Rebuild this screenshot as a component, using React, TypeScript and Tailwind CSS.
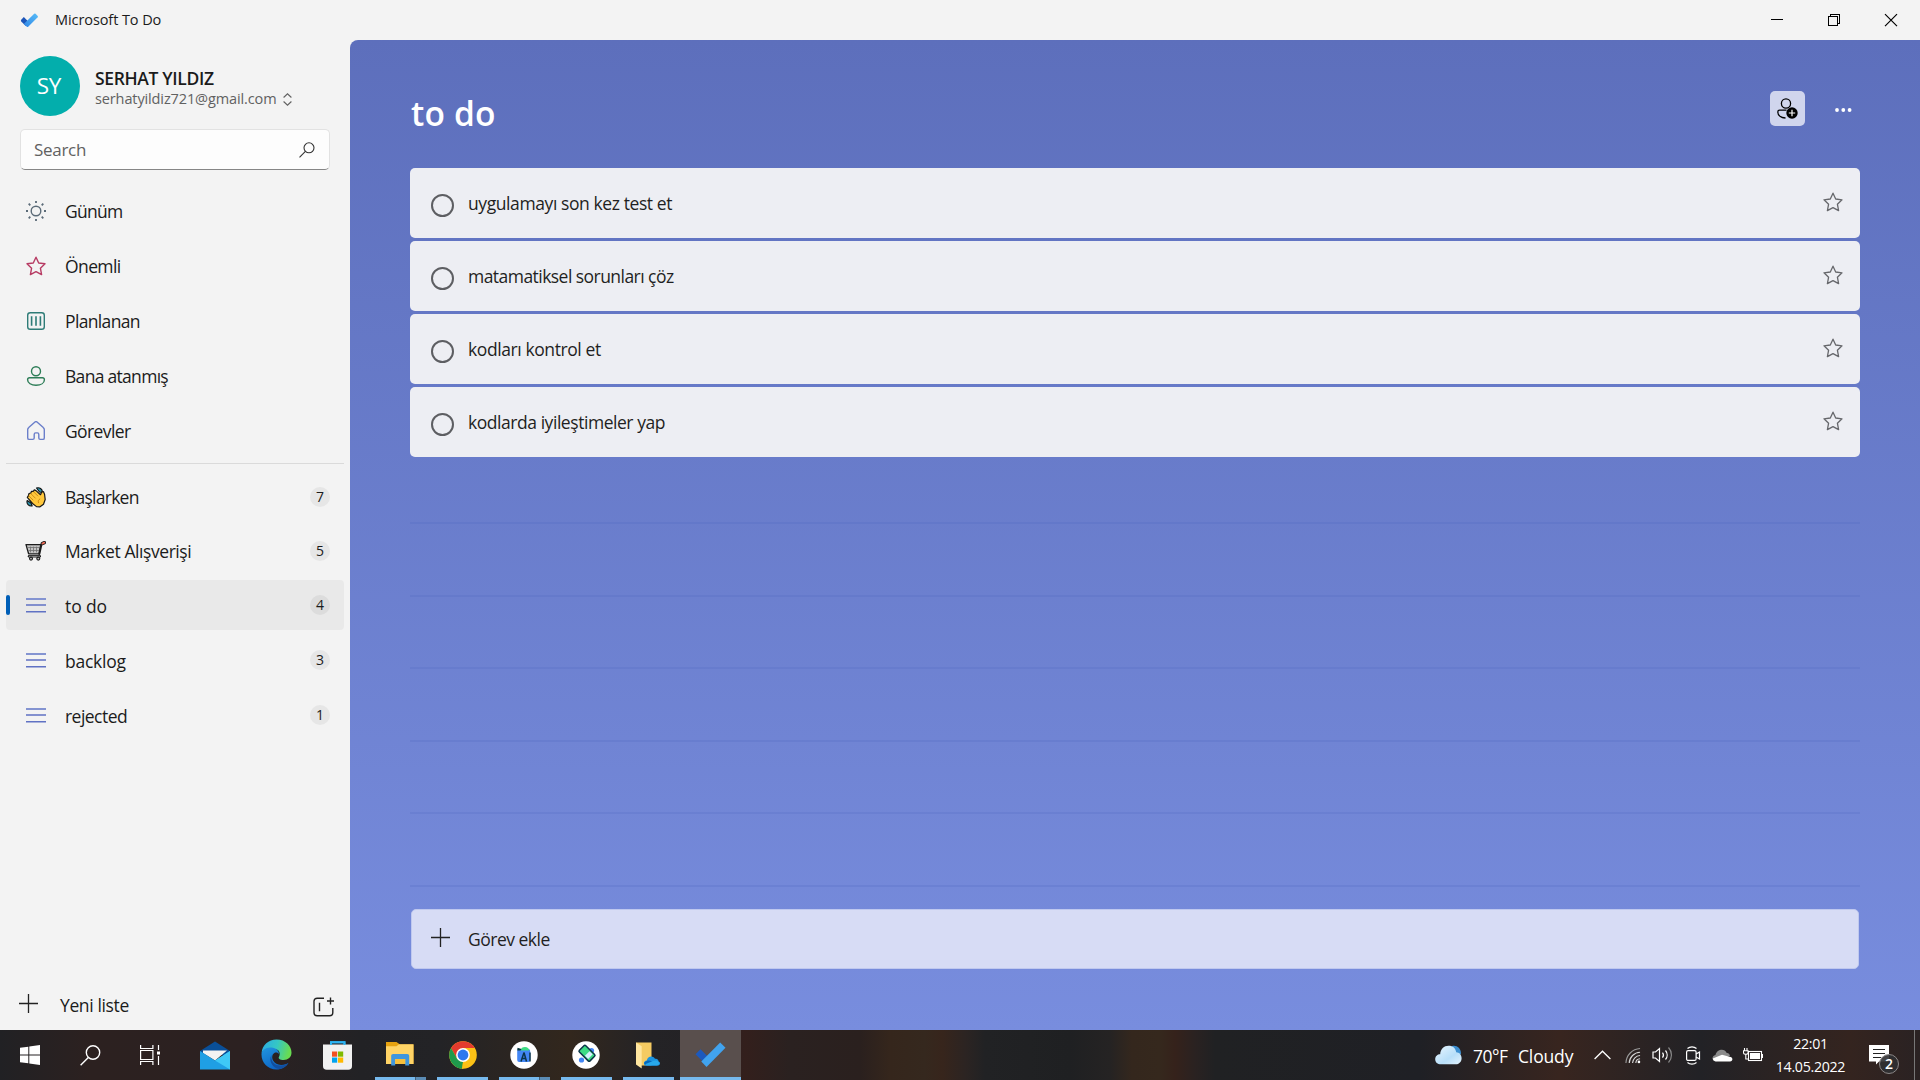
import React from "react";

const STAR = "M10 1.2 L12.7 7 L19 7.8 L14.4 12.2 L15.6 18.6 L10 15.6 L4.4 18.6 L5.6 12.2 L1 7.8 L7.3 7 Z";

function Star({ color, width = 1.3 }: { color: string; width?: number }) {
  return (
    <svg width="20" height="20" viewBox="0 0 20 20" fill="none" stroke={color} strokeWidth={width} strokeLinejoin="round" className="shrink-0">
      <path d={STAR} />
    </svg>
  );
}

function SunIcon() {
  return (
    <svg width="20" height="20" viewBox="0 0 20 20" fill="none" stroke="#5b6b78" strokeWidth="1.4">
      <circle cx="10" cy="10" r="4.8" />
      <path d="M10 0v2M10 18v2M0 10h2M18 10h2M2.700 2.700l1.600 1.600M15.700 15.700l1.600 1.600M2.700 17.300l1.600-1.600M15.700 4.300l1.600-1.600" strokeWidth="1.800" />
    </svg>
  );
}

function PlannedIcon() {
  return (
    <svg width="20" height="20" viewBox="0 0 20 20" fill="none" stroke="#2e7c77" strokeWidth="1.4">
      <rect x="1.7" y="1.7" width="16.6" height="16.6" rx="2.6" />
      <path d="M5.6 5.2v9.6M10 5.2v9.6M14.4 5.2v9.6" strokeWidth="1.6" />
    </svg>
  );
}

function AssignedIcon() {
  return (
    <svg width="20" height="20" viewBox="0 0 20 20" fill="none" stroke="#2d7d57" strokeWidth="1.4">
      <circle cx="10" cy="5.200" r="4.500" />
      <path d="M3.600 11.800h12.800c1.200 0 2 .8 2 1.900 0 3.400-3.600 5.600-8.400 5.600s-8.400-2.200-8.400-5.600c0-1.100.8-1.900 2-1.900z" />
    </svg>
  );
}

function HomeIcon() {
  return (
    <svg width="20" height="20" viewBox="0 0 20 20" fill="none" stroke="#6b7fca" strokeWidth="1.4" strokeLinejoin="round">
      <path d="M8.7 1.2a2 2 0 0 1 2.6 0l6 5.4c.7.6 1 1.200 1 2v8.300c0 .9-.5 1.500-1.400 1.500h-2.700c-.8 0-1.400-.6-1.400-1.400v-3.500c0-1-.5-1.600-1.400-1.600h-1.800c-.9 0-1.400.6-1.400 1.600v3.500c0 .8-.6 1.400-1.400 1.400H3.100c-.9 0-1.400-.6-1.400-1.500V8.600c0-.8.3-1.400 1-2z" />
    </svg>
  );
}

function WaveIcon() {
  return (
    <svg width="20" height="21" viewBox="0 0 20 21" strokeLinejoin="round" strokeLinecap="round">
      <path d="M10.500 1c3-1 6 1 6 4.500l-3-.5z" fill="#2b93ad" stroke="#111" strokeWidth="1.100" />
      <path d="M1.200 13.500c-1 3 1.500 6 5 5.500l-1.200-3z" fill="#2b93ad" stroke="#111" strokeWidth="1.100" />
      <path d="M1.300 10.300 2.300 8.900 3 6.500 4.700 6.200 5.500 4.300 7.300 4.300 8.300 2.800 10 3.600 14.500 7.700 15.800 4.800 17.500 4.600 18.600 7.500 19.200 12.500 17.500 17.200 14 19.800 10.500 19.600 6.500 16.500z" fill="#ffc83d" stroke="#161616" strokeWidth="1.200" />
      <path d="M3 9l4 4M5 6.800l4.300 4.300M7.800 5l4 4M13.800 12c-1.500.8-2 2.400-1.300 3.800" fill="none" stroke="#c98612" strokeWidth=".9" />
    </svg>
  );
}

function CartIcon() {
  return (
    <svg width="21" height="20" viewBox="0 0 21 20" strokeLinejoin="round" strokeLinecap="round" fill="none" className="-ml-px">
      <path d="M1 3.600h14.800l-1.700 9.200H3.600z" fill="#c4c4c4" stroke="#1c1c1c" strokeWidth="1.300" />
      <path d="M5.500 6v5M8.500 6v5M11.500 6v5M3.500 6.500h11M3.800 9.500h10" stroke="#6f6f6f" strokeWidth=".8" />
      <path d="M14.300 13 16.500 3.300l1.500-1.100" stroke="#1c1c1c" strokeWidth="2" />
      <path d="M17.400 2.500l1.900-.9" stroke="#1c1c1c" strokeWidth="3.400" />
      <path d="M17.500 2.500l1.700-.8" stroke="#ee6a56" strokeWidth="1.900" />
      <path d="M4 15.300h10.800" stroke="#1c1c1c" strokeWidth="2.400" />
      <path d="M4.300 15.300h10.200" stroke="#aaa" strokeWidth=".9" />
      <circle cx="6" cy="17.600" r="1.500" fill="#bbb" stroke="#1c1c1c" strokeWidth="1.100" />
      <circle cx="13.300" cy="17.600" r="1.500" fill="#bbb" stroke="#1c1c1c" strokeWidth="1.100" />
    </svg>
  );
}

function LinesIcon() {
  return (
    <svg width="20" height="15" viewBox="0 0 20 15" className="mt-px">
      <path d="M0 0h20v2H0z" fill="#8494d1" />
      <path d="M0 6.300h20v1.500H0zM0 13h20v1.500H0z" fill="#6072c4" />
    </svg>
  );
}

function Plus({ className = "" }: { className?: string }) {
  return (
    <svg width="19" height="19" viewBox="0 0 19 19" stroke="#222" strokeWidth="1.300" className={className}>
      <path d="M9.500 0v19M0 9.500h19" />
    </svg>
  );
}

const smart = [
  { label: "Günüm", icon: <SunIcon />, track: "tracking-[-0.750px]" },
  { label: "Önemli", icon: <Star color="#b73b63" width={1.4} />, track: "tracking-[-0.600px]" },
  { label: "Planlanan", icon: <PlannedIcon />, track: "tracking-[-0.650px]" },
  { label: "Bana atanmış", icon: <AssignedIcon />, track: "tracking-[-0.700px]" },
  { label: "Görevler", icon: <HomeIcon />, track: "tracking-[-0.600px]" },
];

const lists = [
  { label: "Başlarken", count: 7, icon: <WaveIcon />, gap: "", track: "tracking-[-0.750px]" },
  { label: "Market Alışverişi", count: 5, icon: <CartIcon />, gap: "mt-1", track: "tracking-[-0.430px]" },
  { label: "to do", count: 4, icon: <LinesIcon />, gap: "mt-1", track: "mt-0.5 tracking-[-0.100px]", active: true },
  { label: "backlog", count: 3, icon: <LinesIcon />, gap: "mt-[5px]", track: "mt-0.5 tracking-[-0.260px]" },
  { label: "rejected", count: 1, icon: <LinesIcon />, gap: "mt-[5px]", track: "mt-0.5 tracking-[-0.530px]" },
];

const tasks = [
  { title: "uygulamayı son kez test et", track: "tracking-[-0.410px]" },
  { title: "matamatiksel sorunları çöz", track: "tracking-[-0.540px]" },
  { title: "kodları kontrol et", track: "tracking-[-0.410px]" },
  { title: "kodlarda iyileştimeler yap", track: "tracking-[-0.450px]" },
];

function TitleBar() {
  return (
    <header className="flex h-10 items-center justify-between pl-5">
      <div className="flex items-center">
        <svg width="19" height="15" viewBox="0 0 19 15">
          <defs>
            <linearGradient id="tick" x1="0" y1="1" x2="1" y2="0">
              <stop offset="0" stopColor="#2f86e6" />
              <stop offset="1" stopColor="#58bdf8" />
            </linearGradient>
          </defs>
          <path d="M3.800 4 9 9.200 5.800 13 1.200 8.400Q.6 7.500 1.200 6.700z" fill="#1c55b8" />
          <path d="M14.200.8q.7-.6 1.400 0l2.100 2.100q.6.7 0 1.400L8.200 13.800q-.7.600-1.400 0L3.800 10.900z" fill="url(#tick)" />
        </svg>
        <span className="ml-4 text-[14.500px] tracking-[-0.080px] text-[#1b1b1b]">Microsoft To Do</span>
      </div>
      <div className="flex h-full items-center" aria-label="Window controls">
        <svg width="170" height="40" viewBox="0 0 170 40" fill="none" stroke="#000" shapeRendering="crispEdges">
          <path d="M21 19.500h12" />
          <path d="M78.500 16.500h9v9h-9zM80.500 16v-1.500h9v9H88" />
          <path d="M135 14.200l12 12M147 14.200l-12 12" shapeRendering="auto" strokeWidth="1.200" />
        </svg>
      </div>
    </header>
  );
}

function Sidebar() {
  return (
    <aside className="flex w-[350px] shrink-0 flex-col text-[17.500px] text-[#1b1b1b]">
      <div className="mt-4 flex h-[60px] items-center pl-5">
        <div className="flex size-[60px] items-center justify-center rounded-full bg-[#03aeac] pr-0.5 text-[22.500px] tracking-[-0.300px] text-white">SY</div>
        <div className="ml-[15px] flex flex-col">
          <span className="mt-1 text-[17.500px] leading-[22px] font-semibold tracking-[-0.350px]">SERHAT YILDIZ</span>
          <span className="flex items-center text-[14.500px] leading-5 tracking-[-0.120px] text-[#616161]">
            serhatyildiz721@gmail.com
            <svg width="9" height="13" viewBox="0 0 9 13" fill="none" stroke="#616161" strokeWidth="1.100" className="ml-[7px]">
              <path d="M.6 4.500 4.500.8l3.900 3.700M.6 8.500l3.900 3.700 3.900-3.700" />
            </svg>
          </span>
        </div>
      </div>
      <div className="mt-[13px] ml-5 flex h-[41px] w-[310px] items-center justify-between rounded-[5px] border border-[#e2e2e2] border-b-[#868686] bg-[#fdfdfd] pr-[14px] pl-[13px] text-[#616161]">
        <span className="text-[17px] tracking-[-0.300px]">Search</span>
        <svg width="16" height="16" viewBox="0 0 16 16" fill="none" stroke="#333" strokeWidth="1.100">
          <circle cx="10" cy="5.800" r="5" />
          <path d="M6.400 9.400.5 15.300" />
        </svg>
      </div>
      <nav className="mt-4 flex flex-col gap-[5px]">
        {smart.map((s) => (
          <div key={s.label} className="flex h-[50px] items-center pl-[26px]">
            <span className="flex w-[39px]">{s.icon}</span>
            <span className={s.track}>{s.label}</span>
          </div>
        ))}
      </nav>
      <div className="mx-1.5 mt-[7px] h-px bg-[#dadada]" />
      <nav className="mt-2 flex flex-col px-1.5">
        {lists.map((l) => (
          <div key={l.label} className={`flex h-[50px] items-center rounded-[4px] pr-3.5 ${l.gap} ${l.active ? "bg-[#e9e9e9]" : ""}`}>
            <span className={`h-5 w-1 rounded-full ${l.active ? "bg-[#005fb8]" : ""}`} />
            <span className="ml-4 flex w-[39px]">{l.icon}</span>
            <span className={`flex-1 ${l.track}`}>{l.label}</span>
            <span className={`flex size-5 items-center justify-center rounded-full text-[14px] leading-none ${l.active ? "bg-[#dcdcdc]" : "bg-[#e6e6e6]"}`}>{l.count}</span>
          </div>
        ))}
      </nav>
      <div className="mt-auto flex h-[50px] items-center pl-[19px]">
        <Plus className="-mt-[3px]" />
        <span className="ml-[22px] flex-1 tracking-[-0.370px]">Yeni liste</span>
        <svg width="21" height="20" viewBox="0 0 21 20" fill="none" stroke="#222" strokeWidth="1.400" className="mr-4 mt-1">
          <path d="M11 1.200H4.200c-2 0-3.200 1.100-3.200 3v11.400c0 2 1.100 3.200 3.200 3.200h12.400c2 0 3.200-1.200 3.200-3.200V11" />
          <path d="M6.500 5.800v8.500M17.500.5v7M14 4h7" />
        </svg>
      </div>
    </aside>
  );
}

function Main() {
  return (
    <main className="flex flex-1 flex-col rounded-tl-[8px] bg-linear-to-b from-[#5d6fbc] to-[#788dde] pr-[60px] pl-[60px]">
      <div className="flex h-32 items-start justify-between">
        <h1 className="mt-[50px] ml-px text-[33.500px] leading-[46px] font-semibold tracking-[0.200px] text-white">to do</h1>
        <div className="mt-[51px] flex items-center">
          <span className="flex size-[35px] items-center justify-center rounded-[5px] bg-[#d0d5ed]">
            <svg width="21" height="21" viewBox="0 0 21 21" fill="none" stroke="#000" strokeWidth="1.300">
              <circle cx="9" cy="5.500" r="4.600" />
              <path d="M9.500 12.200H2.600C1.400 12.200.8 12.900.8 14c0 3.300 3.200 5.700 7.700 6" />
              <circle cx="15" cy="15" r="5.700" fill="#000" stroke="none" />
              <path d="M15 11.800v6.400M11.800 15h6.400" stroke="#fff" strokeWidth="1.200" />
            </svg>
          </span>
          <svg width="17" height="4" viewBox="0 0 17 4" fill="#fff" className="mr-2 ml-[30px] mt-0.5">
            <circle cx="2" cy="2" r="1.900" />
            <circle cx="8.300" cy="2" r="1.900" />
            <circle cx="14.600" cy="2" r="1.900" />
          </svg>
        </div>
      </div>
      <ul className="flex flex-col gap-[3px]">
        {tasks.map((t) => (
          <li key={t.title} className="flex h-[70px] items-center rounded-[5px] bg-[#edeef3] pr-[17px] pl-[21px]">
            <span className="mt-[5px] size-[23px] rounded-full border-2 border-[#5d5e62]" />
            <span className={`mt-px ml-3.5 flex-1 text-[17.500px] text-[#1f1f22] ${t.track}`}>{t.title}</span>
            <span className="-mt-0.5"><Star color="#66676b" /></span>
          </li>
        ))}
      </ul>
      <div className="mt-[65px] flex flex-col gap-[70.500px]">
        {[0, 1, 2, 3, 4, 5].map((n) => (
          <div key={n} className="h-0.5 bg-[#4a63c0]/20" />
        ))}
      </div>
      <div className="mx-px mt-auto mb-[61px] flex h-[60px] items-center rounded-[5px] border border-[#bfc8ef] bg-[#d7dcf5] pl-[18.500px] text-[17.500px] text-[#1f1f22]">
        <Plus className="-mt-[3px]" />
        <span className="ml-[18.500px] tracking-[-0.500px]">Görev ekle</span>
      </div>
    </main>
  );
}

function App() {
  return (
    <div className="flex h-[1080px] w-[1920px] flex-col overflow-hidden bg-[#f3f3f3] font-['Open_Sans','Noto_Sans',sans-serif]">
      <TitleBar />
      <div className="flex min-h-0 flex-1">
        <Sidebar />
        <Main />
      </div>
      <Taskbar />
    </div>
  );
}

function AppSlot({ children, running, stacked, active }: { children: React.ReactNode; running?: boolean; stacked?: boolean; active?: boolean }) {
  return (
    <div className={`flex h-[50px] flex-col ${active ? "w-[61px] bg-[#594f4d]" : "mr-[11px] w-[51px]"}`}>
      <div className="flex flex-1 items-center justify-center">{children}</div>
      <div className="flex h-[3px]">
        <span className={`flex-1 ${running ? "bg-[#76b9ed]" : ""}`} />
        {stacked && <span className="w-[11px] border-l border-[#44617a] bg-[#5b8cb5]" />}
      </div>
    </div>
  );
}

function Taskbar() {
  return (
    <footer className="flex h-[50px] items-center bg-[linear-gradient(90deg,#212124_0px,#2c2120_90px,#2c2121_250px,#222225_360px,#232326_440px,#32271d_570px,#242326_650px,#232225_700px,#331f1c_745px,#2a2120_790px,#2a201e_860px,#35261c_890px,#35281e_925px,#37251c_942px,#2c2422_965px,#212224_985px,#1f2022_1070px,#252323_1110px,#34271d_1132px,#35281d_1160px,#35221b_1175px,#2a2221_1195px,#202123_1215px,#1f2025_1420px,#38251f_1560px,#222226_1700px,#34241f_1850px,#2a2223_1920px)] text-white">
      <div className="flex h-full items-center pl-5">
        <svg width="20" height="20" viewBox="0 0 20 20" fill="#fff">
          <path d="M0 2.800 8.300 1.700v7.800H0zM9.300 1.500 20 0v9.500H9.300zM0 10.500h8.300v7.800L0 17.200zM9.300 10.500H20V20L9.300 18.500z" />
        </svg>
        <svg width="21" height="21" viewBox="0 0 21 21" fill="none" stroke="#fff" strokeWidth="1.400" className="ml-10">
          <circle cx="13" cy="7.500" r="6.700" />
          <path d="M8.300 12.400.6 20.300" />
        </svg>
        <svg width="21" height="20" viewBox="0 0 21 20" fill="none" stroke="#fff" strokeWidth="1.200" className="ml-[39px]">
          <path d="M.6 0v3.500h12.300V0M.6 20v-3.500h12.300V20M.6 5.500h12.300v9H.6zM18.500 0v5M18.500 11v9" />
          <rect x="17" y="6.500" width="3" height="3" fill="#fff" stroke="none" />
        </svg>
      </div>
      <div className="flex h-full pl-7">
        <AppSlot>
          <svg width="30" height="29" viewBox="0 0 30 29" className="mt-1">
            <path d="M0 10 15 .5 30 10v4H0z" fill="#0a4f98" />
            <path d="M3 9.500h24L15 19.500 3 12z" fill="#f3f3f3" />
            <path d="M0 10v18.500h30V10L15 19.500z" fill="#1f9fe4" />
            <path d="M30 10v18.500L15 19.500z" fill="#3fc9f6" />
          </svg>
        </AppSlot>
        <AppSlot>
          <svg width="31" height="31" viewBox="0 0 31 31" className="mt-0.5">
            <defs>
              <linearGradient id="edgeA" x1="0" y1="0" x2="1" y2=".2">
                <stop offset="0" stopColor="#2aa9e6" />
                <stop offset=".55" stopColor="#35c7c4" />
                <stop offset="1" stopColor="#68dc52" />
              </linearGradient>
              <linearGradient id="edgeB" x1="0" y1="0" x2=".6" y2="1">
                <stop offset="0" stopColor="#2196e0" />
                <stop offset="1" stopColor="#0c62c4" />
              </linearGradient>
            </defs>
            <path d="M.6 14C1.200 6 7.500.5 15.500.5 24.500.5 30.500 7 30.500 13.500c0 4.700-3.500 7.500-7.800 7.500-4 0-5.700-1.600-4.800-3 2-3.500.500-8-4.900-8C7 9.500 2 11 .6 14z" fill="url(#edgeA)" />
            <path d="M.5 15.500C.5 11 5 8 10.500 8.500c4.200.400 7.500 3 7.500 6.500-1-1.700-4.500-2.500-6.200.6-2 3.800 1 10.700 8.700 10.400 3-.1 5-1 7-2.300-2.500 4.300-7 6.800-12 6.800C6.500 30.500.5 23.500.5 15.500z" fill="url(#edgeB)" />
            <path d="M10.500 16c-1.200 5.500 3 11.500 10 10.500 3-.3 5-1.200 6.800-2.500-2.300 3.700-5.500 5.500-8.800 6.100C12 29.500 7 22 10.500 16z" fill="#124f9f" />
          </svg>
        </AppSlot>
        <AppSlot>
          <svg width="29" height="30" viewBox="0 0 29 30" className="mr-0.5 mt-0.5">
            <path d="M8 8V2.200h13.500V8" fill="none" stroke="#2db4f3" strokeWidth="1.900" />
            <path d="M0 4.500h29V26c0 2.500-1.200 3.700-3.700 3.700H3.700C1.200 29.700 0 28.500 0 26z" fill="#f1f1f1" />
            <path d="M8 5V2.200h13.500V5" fill="none" stroke="#2db4f3" strokeWidth="1.900" />
            <path d="M9 11.500h5.200v5.200H9z" fill="#f25022" />
            <path d="M15 11.500h5.200v5.200H15z" fill="#7fba00" />
            <path d="M9 17.500h5.200v5.200H9z" fill="#00a4ef" />
            <path d="M15 17.500h5.200v5.200H15z" fill="#ffb900" />
          </svg>
        </AppSlot>
        <AppSlot running stacked>
          <svg width="28" height="24" viewBox="0 0 28 24" className="mr-0.5">
            <path d="M0 0h10.500l3.500 2.500H27.500V22H0z" fill="#e6a210" />
            <path d="M0 4.200h10.500L13 2.200h14.500V22H0z" fill="#ffd466" />
            <path d="M5.200 23.500V14c0-1.300.7-2 2-2h14c1.300 0 2 .7 2 2v9.500h-4V17.200H9.200v6.300z" fill="#3f96dd" />
            <path d="M9.200 17h10v5h-10z" fill="#f7bf3b" />
          </svg>
        </AppSlot>
        <AppSlot running>
          <svg width="28" height="28" viewBox="0 0 28 28" className="mt-0.5">
            <circle cx="14" cy="14" r="13.800" fill="#fbc116" />
            <path d="M14 7.100h11.950A13.800 13.800 0 0 0 2.050 7.100L8 17.500z" fill="#e33b2e" />
            <path d="M2.050 7.100 8 17.500 14 20.900 13.300 27.800A13.800 13.800 0 0 1 2.050 7.100z" fill="#1f9a4c" />
            <path d="M14 20.900 20 17.500 14 27.800h-1z" fill="#fbc116" />
            <circle cx="14" cy="14" r="6.900" fill="#fff" />
            <circle cx="14" cy="14" r="5.400" fill="#2d78ee" />
          </svg>
        </AppSlot>
        <AppSlot running stacked>
          <svg width="28" height="28" viewBox="0 0 28 28" className="mr-0.5 mt-0.5">
            <circle cx="14" cy="14" r="13.700" fill="#fff" />
            <rect x="7.200" y="8" width="13" height="13" rx="2" fill="#4286f5" />
            <path d="M10.500 9.500C11 7 12.500 6 15 6s4 1.200 4.200 3.500z" fill="#3ddc84" />
            <path d="M7.500 6.800l4 1.200-1 1.500H7.200z" fill="#06363f" />
            <path d="M14 11.500 11 20.500M14 11.500l2.500 9M20 11.500v9M12.300 17.500h3.600" fill="none" stroke="#0b3448" strokeWidth="1.500" />
          </svg>
        </AppSlot>
        <AppSlot running>
          <svg width="28" height="28" viewBox="0 0 28 28" className="mr-0.5 mt-0.5">
            <circle cx="14" cy="14" r="13.700" fill="#fff" />
            <circle cx="19.500" cy="9.500" r="2.600" fill="#4286f5" />
            <circle cx="9.500" cy="19" r="2.600" fill="#4286f5" />
            <g transform="rotate(-45 14.500 12.500)">
              <rect x="10.500" y="5.200" width="9" height="15" rx="1.300" fill="#3ddc84" stroke="#0b3448" strokeWidth="1.500" />
              <path d="M11.800 13h6.500v4.500h-6.500z" fill="#d7effe" />
            </g>
          </svg>
        </AppSlot>
        <AppSlot running>
          <svg width="25" height="27" viewBox="0 0 25 27" className="mt-1 mr-0.5">
            <path d="M1 .5h15.500v23H4z" fill="#f5cb62" />
            <path d="M1 .5l5.700 3.700v22.300L1 22.500z" fill="#ffe6a0" />
            <path d="M11.500 23.500c-3.500 0-3.500-4.800.3-5 .7-4.500 6-5.500 8.200-1.800 3 0 3.500 1.500 3.500 2.800 2.500.5 2 4-1 4z" fill="#1a93e0" />
            <path d="M9.500 20.500c2.500-2.500 5-2.500 8-.7l4.800 3.700H11.500c-1.500 0-2.500-1.500-2-3z" fill="#0667bb" />
            <path d="M10 22.300 18 19c2.500-1.200 5.500-.3 6 1.500.3 1.700-.5 3-2.300 3H11.500z" fill="#28a8ea" />
          </svg>
        </AppSlot>
      </div>
      <div className="-ml-[5px]">
        <AppSlot running active>
          <svg width="31" height="26" viewBox="0 0 31 26" className="mt-0.5">
            <path d="M5.500 7.200 14.500 16.200 9.500 21.300.5 12.300z" fill="#1c59bd" />
            <path d="M25.200.5 30.500 5.800 11.500 24.900 6.300 19.600z" fill="#41a3ee" />
          </svg>
        </AppSlot>
      </div>
      <div className="ml-auto flex h-full items-center">
        <svg width="27" height="20" viewBox="0 0 27 20">
          <defs>
            <linearGradient id="cloud" x1="0" y1="0" x2="1" y2="1">
              <stop offset="0" stopColor="#e9f6ff" />
              <stop offset=".6" stopColor="#b8dff9" />
              <stop offset="1" stopColor="#e3f2fc" />
            </linearGradient>
          </defs>
          <path d="M15 2.500c4-4 11-.5 11 6l-4 5z" fill="#3d8fd0" />
          <path d="M6 19.300c-3.500 0-5.800-2-5.800-5 0-3 2.200-5 5-5C5.500 4 9 .8 13.500.8c4.500 0 7.200 2.700 7.700 6.500 3.300.2 5.400 2.700 5.400 5.900 0 3.500-2.400 6.100-6 6.100z" fill="url(#cloud)" />
        </svg>
        <span className="mt-0.5 ml-[11px] w-[36px] text-[17.500px] tracking-[-0.500px]">70°F</span>
        <span className="mt-0.5 ml-[9px] w-[56px] text-[17.500px] tracking-[-0.150px]">Cloudy</span>
        <svg width="17" height="10" viewBox="0 0 17 10" fill="none" stroke="#fff" strokeWidth="1.300" className="ml-5">
          <path d="M.6 9 8.500 1.200 16.400 9" />
        </svg>
        <svg width="16" height="17" viewBox="0 0 17 17" fill="none" stroke="#d8d8d8" strokeWidth="1.200" className="ml-3.5">
          <path d="M1 16.500A16 16 0 0 1 16 1" stroke="#999" />
          <path d="M4.500 16.500A12 12 0 0 1 16 5M8 16.500A8.500 8.500 0 0 1 16 8.500M11.500 16.500A4.800 4.800 0 0 1 16 12" />
          <circle cx="14.800" cy="15.300" r="1.400" fill="#fff" stroke="none" />
        </svg>
        <svg width="21" height="18" viewBox="0 0 21 18" fill="none" stroke="#fff" strokeWidth="1.200" className="ml-[11px]">
          <path d="M1 6h2.500L7.500 2.500v13L3.500 12H1zM10.500 6.500a4 4 0 0 1 0 5M13.500 4.500a7 7 0 0 1 0 9" />
          <path d="M16.500 1.500a11 11 0 0 1 0 15" stroke="#888" />
        </svg>
        <svg width="15" height="19" viewBox="1 0 15 19" fill="none" stroke="#fff" strokeWidth="1.200" className="ml-[13px]">
          <rect x="1.600" y="4.600" width="9.500" height="9.800" rx="1.500" />
          <path d="M11 8l3.500-2v7L11 11M2.500 2.500C5 .3 9 .3 11.500 2.500M2.500 16.500C5 18.700 9 18.700 11.500 16.500" />
        </svg>
        <svg width="21" height="14" viewBox="0 0 21 14" className="ml-[11px]">
          <path d="M3.500 13.500C-.5 13-.5 7.500 3.500 7 5 .5 13 .3 14.500 4.700c2.500.3 3 1.500 3.500 3z" fill="#8b8b8b" />
          <path d="M4 13.500C2 13 1 12 .8 10.500L10 6.800l7.500 2c3.500 0 4 4.500.5 4.700z" fill="#fff" />
        </svg>
        <svg width="20" height="15" viewBox="0 0 20 15" fill="none" stroke="#fff" strokeWidth="1.100" className="ml-2.5">
          <rect x="5.500" y="3.500" width="13" height="9" />
          <path d="M7 5h10v6H7zM18.500 6h1.500v4h-1.500z" fill="#fff" stroke="none" />
          <path d="M1.500 0v2.500M4 0v2.500M.5 2.800h4.600v2c0 2-4.600 2-4.600 0zM2.800 6.500v4.500H5" />
        </svg>
        <div className="ml-3 flex w-[71px] flex-col items-center text-[14.200px] leading-[23px] tracking-[-0.300px]">
          <span>22:01</span>
          <span>14.05.2022</span>
        </div>
        <div className="relative ml-[23px] h-[32px] w-[31px]">
          <svg width="21" height="20" viewBox="0 0 21 20" className="mt-[6px]">
            <path d="M0 0h20v16.500H10L7 19.500V16.500H0z" fill="#fff" />
            <path d="M4 4.500h12M4 8.500h12M4 12.500h8" stroke="#222" strokeWidth="1.200" />
          </svg>
          <span className="absolute top-[15px] left-[10px] flex size-5 items-center justify-center rounded-full border border-[#8b8787] bg-[#303032]/90 text-[14px] leading-none font-semibold">2</span>
        </div>
        <span className="mr-[5px] ml-3.5 h-full w-px bg-[#777]" />
      </div>
    </footer>
  );
}

export default App;
